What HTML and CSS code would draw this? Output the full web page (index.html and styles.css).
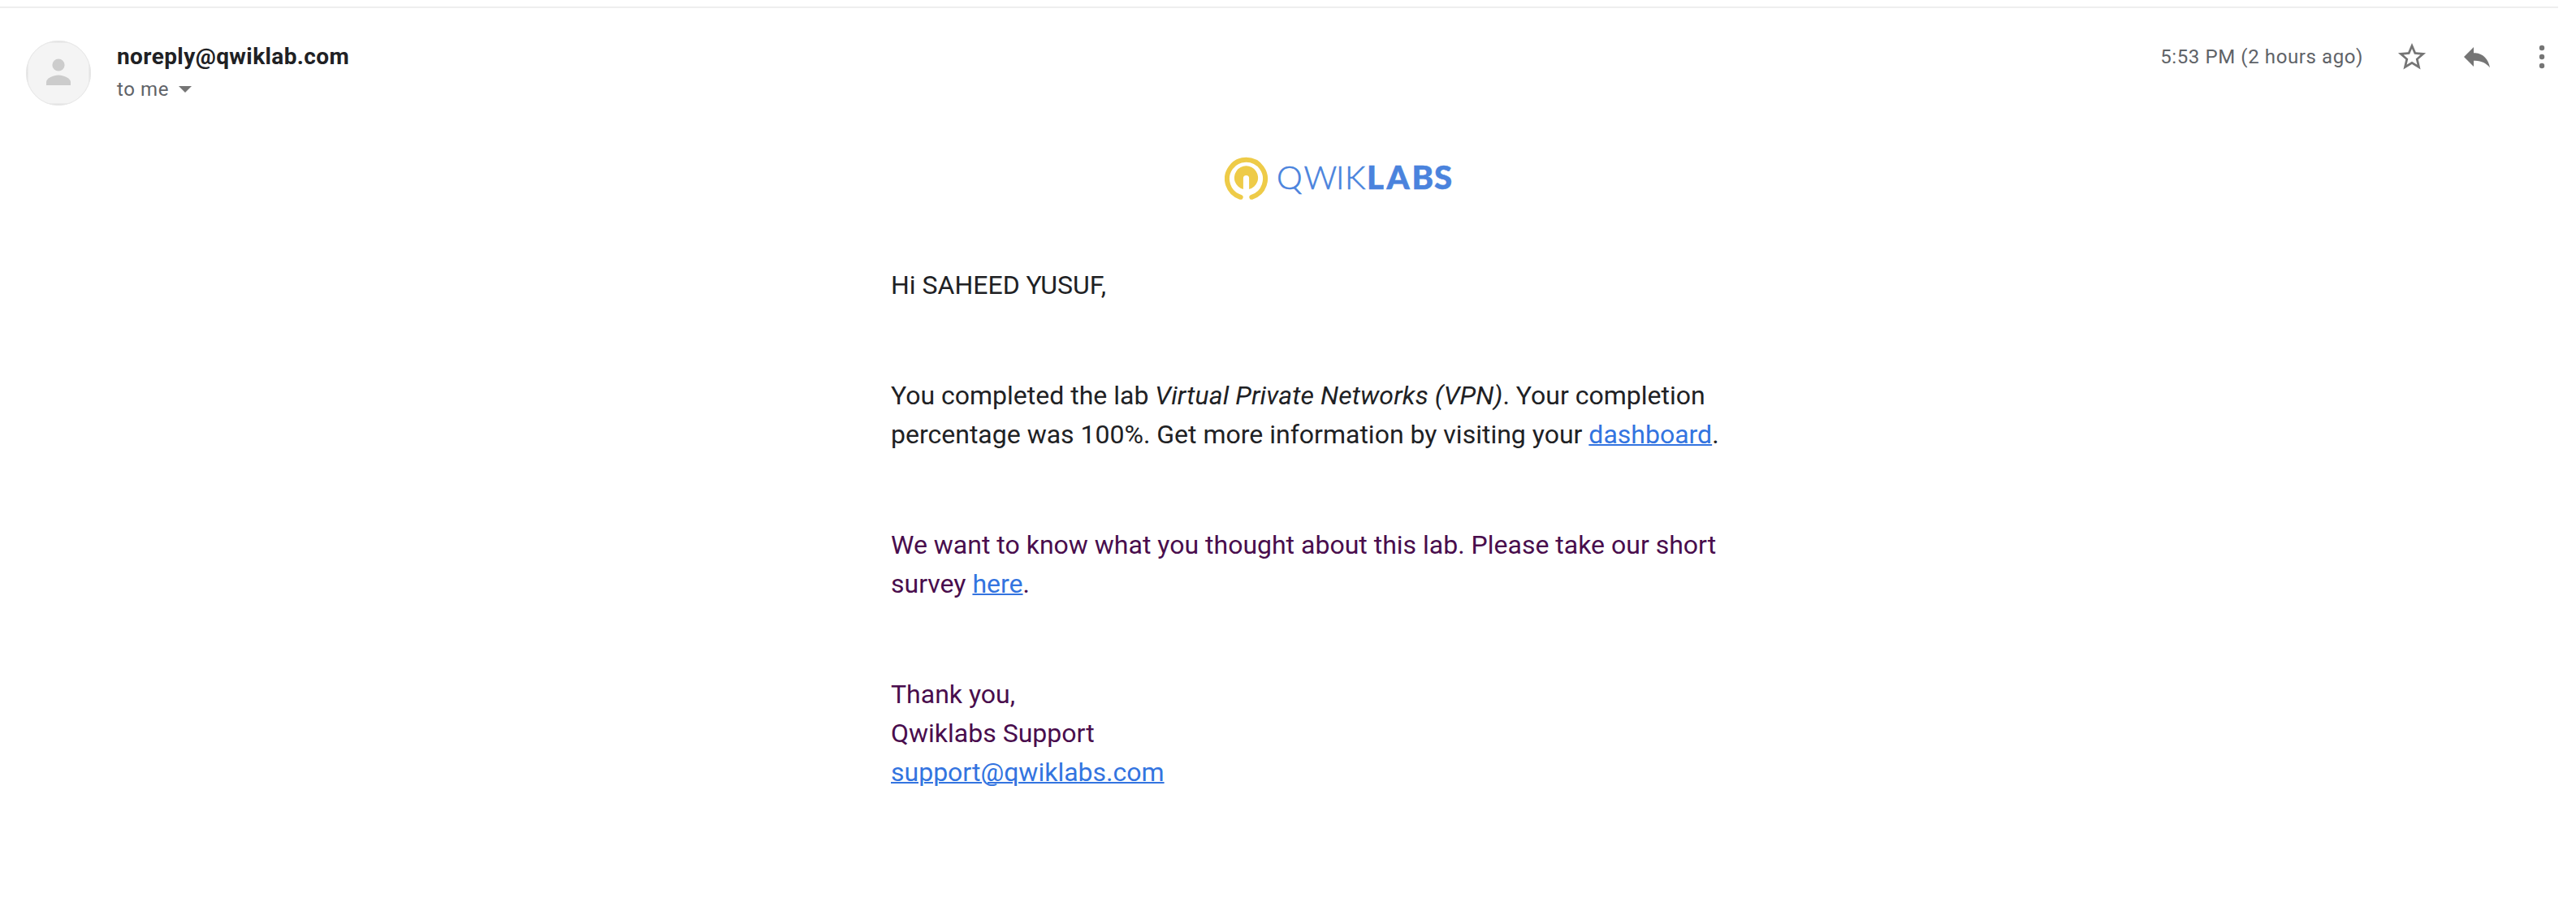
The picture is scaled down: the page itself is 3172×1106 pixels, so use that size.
FILE: index.html
```html
<!DOCTYPE html>
<html lang="en">
<head>
<meta charset="utf-8">
<title>Qwiklabs</title>
<link rel="stylesheet" href="styles.css">
</head>
<body>
<article class="message">
  <header class="header">
    <svg class="avatar" viewBox="0 0 80 80">
      <clipPath id="round"><circle cx="40" cy="40" r="40"/></clipPath>
      <g clip-path="url(#round)">
        <rect width="80" height="80" fill="#e3e3e3"/>
        <rect x="2.5" y="2.5" width="75" height="75" fill="#f4f4f4"/>
      </g>
      <circle cx="40" cy="40" r="39.5" fill="none" stroke="#e8e8e8"/>
      <circle cx="40" cy="30" r="7.6" fill="#ccc"/>
      <path d="M25 55v-4c0-5 9-8.600 15-8.600s15 3.600 15 8.600v4z" fill="#ccc"/>
    </svg>
    <div class="sender">
      <div class="from">noreply@qwiklab.com</div>
      <div class="to"><span>to me</span><svg class="caret" viewBox="0 0 16 8"><path d="M0 0h16l-8 8z"/></svg></div>
    </div>
    <div class="meta">
      <time class="time">5:53 PM (2 hours ago)</time>
      <svg class="icon" viewBox="0.300 0.300 23.400 23.400"><path d="M22 9.240l-7.190-.62L12 2 9.190 8.630 2 9.240l5.460 4.730L5.820 21 12 17.270 18.180 21l-1.630-7.030L22 9.240zM12 15.400l-3.760 2.270 1-4.280-3.320-2.880 4.380-.38L12 6.100l1.710 4.040 4.380.38-3.320 2.880 1 4.280L12 15.400z"/></svg>
      <svg class="icon" viewBox="0 0 40 40"><path d="M16 8L4 20l12 12v-7.200c9 0 15 2.700 20 8.500-2-11-9-18-20-18.100z"/></svg>
      <svg class="icon" viewBox="0 0 40 40"><circle cx="20" cy="9" r="3.200"/><circle cx="20" cy="20" r="3.200"/><circle cx="20" cy="31" r="3.200"/></svg>
    </div>
  </header>
  <section class="body">
    <svg class="logo" viewBox="0 0 284 56">
      <path d="M19.700 50.800A23.500 23.500 0 1 1 33.300 50.800" fill="none" stroke="#eecb48" stroke-width="6" stroke-linecap="round"/>
      <path d="M22.900 41.100A14.600 14.600 0 1 1 30.100 41.100V27.500a3.600 3.600 0 0 0-7.200 0z" fill="#eecb48"/>
      <text class="thin" y="40.500" x="64 97.500 137 148">QWIK</text>
      <text class="heavy" y="40.500" x="175 199.500 230.500 258">LABS</text>
    </svg>
    <p>Hi SAHEED YUSUF,</p>
    <p>You completed the lab <em>Virtual Private Networks (VPN)</em>. Your completion percentage was 100%. Get more information by visiting your <a href="#">dashboard</a>.</p>
    <p class="quoted">We want to know what you thought about this lab. Please take our short survey <a href="#">here</a>.</p>
    <p class="quoted">Thank you,<br>Qwiklabs Support<br><a href="#">support@qwiklabs.com</a></p>
  </section>
</article>
</body>
</html>
```
FILE: styles.css
```css
body {
  margin: 0;
  background: #fff;
  color: #202124;
  font-family: Roboto, sans-serif;
}

.message {
  margin-right: 22px;
  padding-top: 8px;
}

.header {
  display: flex;
  border-top: 2px solid #eee;
  padding: 40px 0 0 32px;
}

.avatar {
  width: 80px;
  height: 80px;
}

.sender {
  flex: 1;
  margin-left: 32px;
}

.from {
  font-size: 28px;
  font-weight: 700;
  letter-spacing: 0.4px;
  line-height: 40px;
}

.to {
  display: flex;
  align-items: center;
  gap: 12px;
  color: #5f6368;
  font-size: 24px;
  letter-spacing: 0.6px;
  line-height: 40px;
}

.caret {
  width: 16px;
  height: 8px;
  fill: #757575;
}

.meta {
  display: flex;
  align-items: center;
  gap: 40px;
  height: 40px;
}

.time {
  color: #5f6368;
  font-size: 24px;
  letter-spacing: 0.6px;
}

.icon {
  width: 40px;
  height: 40px;
  fill: #757575;
}

.body {
  width: 1060px;
  margin: 0 auto 0 1097px;
  font-size: 32px;
  line-height: 48px;
}

.logo {
  display: block;
  width: 284px;
  height: 56px;
  margin: 62px 0 79px 411px;
}

.logo text {
  fill: #4a83dd;
  stroke: #4a83dd;
  stroke-width: 0.6px;
  font-family: Lato, sans-serif;
  font-size: 40px;
}

.logo .thin { font-weight: 300; }
.logo .heavy { font-weight: 900; }

.body p {
  margin: 0 0 88px;
}

.body em {
  letter-spacing: 0.1px;
}

.quoted {
  color: #490d4d;
}

.body a {
  color: #3374e0;
  text-decoration-thickness: 2px;
}
```
